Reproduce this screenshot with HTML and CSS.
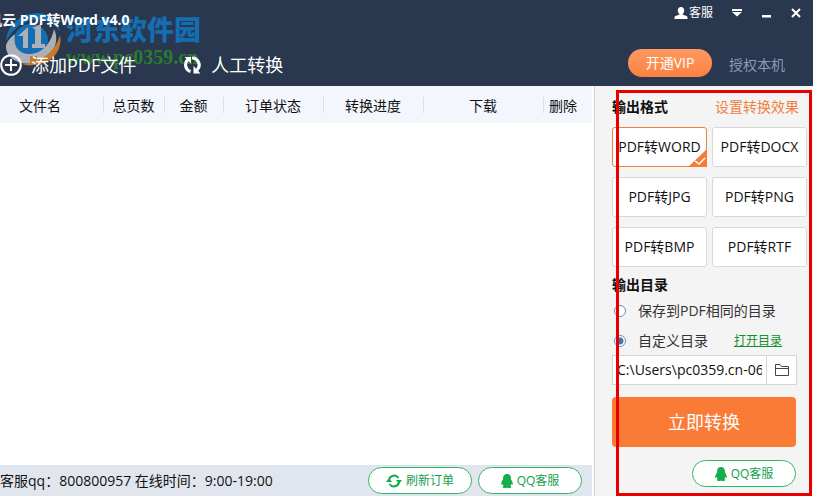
FILE: index.html
```html
<!DOCTYPE html>
<html lang="zh-CN">

<head>
    <meta charset="UTF-8">
    <meta name="viewport" content="width=device-width, initial-scale=1.0">
    <title>PDF转Word v4.0</title>
    <link rel="stylesheet" href="styles.css">
</head>

<body>
    <header class="header">
        <div class="watermark">
            <svg width="56" height="54" viewBox="0 0 56 54">
                <ellipse cx="26" cy="28" rx="17" ry="16" fill="#1277c4"/>
                <path d="M1 29C2 13 16 1 33 1c10 0 18 6 22 18C46 8 34 5 23 9 12 13 7 20 1 29z" fill="#1277c4"/>
                <path d="M10 22c-2 10 2 19 12 20 14 1 24-10 27-25 7 14-3 31-20 34C13 54 0 45 1 33c2-5 5-8 9-11z" fill="#c3c6cb"/>
                <path d="M55 23c3 15-8 29-26 30-5 1-9 0-12-1 20-2 33-12 38-29z" fill="#e08423"/>
                <path d="M13 24l10-9v21h-5V24h-5zM27 16l9-4v20h4v4H27v-4h3V17z" fill="#c3c6cb"/>
                <path d="M25 44h7v9h-7z" fill="#e08423"/>
            </svg>
            <div class="watermark-text">
                <span class="watermark-name">河东软件园</span>
                <span class="watermark-url">www.pc0359.cn</span>
            </div>
        </div>

        <div class="titlebar">
            <h1 class="title">机云 PDF转Word v4.0</h1>
            <div class="window-controls">
                <a href="#" class="service">
                    <svg width="14" height="12" viewBox="0 0 14 12" fill="#fff"><ellipse cx="7" cy="3.6" rx="3.2" ry="3.6"/><path d="M5.5 6h3v1.6l4 1.3q1 .4 1 1.6V12H.5v-1.5q0-1.200 1-1.600l4-1.300z"/></svg>
                    <span>客服</span>
                </a>
                <button type="button" class="win-btn" aria-label="菜单">
                    <svg width="12" height="8" viewBox="0 0 12 8" fill="#fff"><path d="M1 0h10v2H1zM1 3h10L6 7.500z"/></svg>
                </button>
                <button type="button" class="win-btn" aria-label="最小化">
                    <svg width="12" height="10" viewBox="0 0 12 10" fill="#fff"><path d="M1 7h9v2.500H1z"/></svg>
                </button>
                <button type="button" class="win-btn" aria-label="关闭">
                    <svg width="10" height="10" viewBox="0 0 10 10" stroke="#fff" stroke-width="2"><path d="M1 1l8 8M9 1L1 9"/></svg>
                </button>
            </div>
        </div>

        <div class="toolbar">
            <button type="button" class="tool">
                <svg width="22" height="22" viewBox="0 0 22 22" fill="none" stroke="#fff" stroke-width="2"><circle cx="11" cy="11" r="9.800"/><path d="M11 5v12M5 11h12"/></svg>
                <span>添加PDF文件</span>
            </button>
            <button type="button" class="tool">
                <svg width="19" height="18" viewBox="0 0 19 18" fill="none" stroke="#fff" stroke-width="3.200"><path d="M7.500 15.500A7 7 0 0 1 5 3.500M9 2A7 7 0 0 1 14 14"/><path d="M1.500 1H8v6.500zM17.500 17.500H10.500V10z" fill="#fff" stroke="none"/></svg>
                <span>人工转换</span>
            </button>
            <button type="button" class="vip">开通VIP</button>
            <a href="#" class="auth">授权本机</a>
        </div>
    </header>

    <div class="content">
        <main class="main">
            <!-- File list, empty until files are added -->
            <table class="file-table">
                <thead>
                    <tr>
                        <th class="col-name">文件名</th>
                        <th class="col-pages">总页数</th>
                        <th class="col-price">金额</th>
                        <th class="col-status">订单状态</th>
                        <th class="col-progress">转换进度</th>
                        <th class="col-download">下载</th>
                        <th class="col-delete">删除</th>
                    </tr>
                </thead>
                <tbody></tbody>
            </table>

            <footer class="footer">
                <span class="contact">客服qq：800800957 在线时间：9:00-19:00</span>
                <button type="button" class="pill">
                    <svg width="16" height="14" viewBox="0 0 16 14" fill="none" stroke="#12b04c" stroke-width="2"><path d="M3 6a5.200 5.200 0 0 1 9.500-2M13 8a5.200 5.200 0 0 1-9.500 2"/><path d="M0 8h6L3 4zM10 6h6l-3 4z" fill="#12b04c" stroke="none"/></svg>
                    <span>刷新订单</span>
                </button>
                <button type="button" class="pill">
                    <svg width="12" height="14" viewBox="0 0 12 14" fill="#12b04c"><path d="M6 0c2.500 0 4 1.800 4 4.500v1c1.200 1.500 2 3.500 1.700 5-.3.800-.8.400-1.400-.5-.2.800-.5 1.300-1 1.800 1.500.7 1.200 2.200-.8 2.200H7l-1-.5-1 .5H3.500c-2 0-2.300-1.500-.8-2.200-.5-.5-.8-1-1-1.800-.6.900-1.100 1.300-1.400.5C0 9 .8 7 2 5.500v-1C2 1.800 3.500 0 6 0z"/></svg>
                    <span>QQ客服</span>
                </button>
            </footer>
        </main>

        <aside class="sidebar">
            <div class="section-head">
                <h2>输出格式</h2>
                <a href="#" class="effect-link">设置转换效果</a>
            </div>

            <div class="formats">
                <button type="button" class="format active">PDF转WORD
                    <svg class="check" width="19" height="18" viewBox="0 0 19 18"><path d="M19 0v18H0z" fill="#f87c38"/><path d="M7 12l4 3 6-6" fill="none" stroke="#fff" stroke-width="1.500"/></svg>
                </button>
                <button type="button" class="format">PDF转DOCX</button>
                <button type="button" class="format">PDF转JPG</button>
                <button type="button" class="format">PDF转PNG</button>
                <button type="button" class="format">PDF转BMP</button>
                <button type="button" class="format">PDF转RTF</button>
            </div>

            <h2>输出目录</h2>
            <div class="radio-row">
                <input type="radio" id="dirSame" name="dir">
                <label for="dirSame">保存到PDF相同的目录</label>
            </div>
            <div class="radio-row">
                <input type="radio" id="dirCustom" name="dir" checked>
                <label for="dirCustom">自定义目录</label>
                <a href="#" class="open-link">打开目录</a>
            </div>

            <div class="path-row">
                <input type="text" class="path" aria-label="输出目录" value="C:\Users\pc0359.cn-06">
                <button type="button" class="browse" aria-label="浏览">
                    <svg width="14" height="12" viewBox="0 0 14 12" fill="none" stroke="#444"><path d="M.5 11.500V.5h4.500l1.500 2h7v9zM.5 4.500h13"/></svg>
                </button>
            </div>

            <button type="button" class="convert">立即转换</button>
            <button type="button" class="pill side-pill">
                <svg width="12" height="14" viewBox="0 0 12 14" fill="#12b04c"><path d="M6 0c2.500 0 4 1.800 4 4.500v1c1.200 1.500 2 3.500 1.700 5-.3.800-.8.400-1.400-.5-.2.800-.5 1.300-1 1.800 1.500.7 1.200 2.200-.8 2.200H7l-1-.5-1 .5H3.500c-2 0-2.300-1.500-.8-2.200-.5-.5-.8-1-1-1.800-.6.900-1.100 1.300-1.400.5C0 9 .8 7 2 5.500v-1C2 1.800 3.500 0 6 0z"/></svg>
                <span>QQ客服</span>
            </button>

            <!-- Red highlight over the output settings -->
            <div class="highlight"></div>
        </aside>
    </div>
</body>

</html>
```
FILE: styles.css
```css
* {
    box-sizing: border-box;
}

body {
    margin: 0;
    height: 100vh;
    display: flex;
    flex-direction: column;
    overflow: hidden;
    font-family: "Open Sans", "Noto Sans CJK SC", sans-serif;
    font-size: 14px;
    line-height: 20px;
    color: #111;
}

button,
input {
    font-family: inherit;
    font-size: inherit;
    line-height: inherit;
    margin: 0;
    padding: 0;
}

button {
    border: none;
    background: none;
    cursor: pointer;
    white-space: nowrap;
}

a {
    text-decoration: none;
}

svg {
    flex: none;
}

/* Header */
.header {
    position: relative;
    background-color: #29384e;
    color: #fff;
}

.titlebar,
.toolbar {
    position: relative;
}

.titlebar {
    display: flex;
    justify-content: space-between;
    height: 40px;
}

.title {
    margin: 10px 0 0 -12px;
    font-size: 14px;
    font-weight: bold;
    line-height: 20px;
    white-space: nowrap;
}

.window-controls {
    display: flex;
    align-items: center;
    gap: 18px;
    height: 26px;
    padding-right: 12px;
}

.service {
    display: flex;
    align-items: center;
    gap: 1px;
    color: #fff;
    font-size: 12px;
}

.win-btn {
    display: flex;
}

.toolbar {
    display: flex;
    align-items: center;
    height: 46px;
    padding-right: 28px;
}

.tool {
    display: flex;
    align-items: center;
    gap: 9px;
    margin-right: 47px;
    padding-top: 4px;
    color: #fff;
    font-size: 18px;
    line-height: 24px;
}

.vip {
    width: 84px;
    height: 28px;
    margin-left: auto;
    border-radius: 14px;
    background: linear-gradient(#ff9a62, #fb8140);
    color: #fff;
}

.auth {
    margin-left: 17px;
    padding-top: 4px;
    color: #8b9ab8;
}

.watermark {
    position: absolute;
    top: 12px;
    left: 5px;
    display: flex;
    gap: 5px;
    opacity: 0.85;
    pointer-events: none;
}

.watermark-text {
    display: flex;
    flex-direction: column;
    font-weight: 900;
    white-space: nowrap;
}

.watermark-name {
    font-size: 27px;
    line-height: 36px;
    color: #1277c4;
}

.watermark-url {
    font-family: "Liberation Serif", serif;
    font-size: 20px;
    line-height: 18px;
    color: #2b8a2b;
}

/* Content */
.content {
    flex: 1;
    display: flex;
    min-height: 0;
}

.main {
    flex: 1;
    min-width: 0;
    display: flex;
    flex-direction: column;
    justify-content: space-between;
    padding-right: 2px;
    background-color: #fff;
}

.file-table {
    width: 100%;
    table-layout: fixed;
    border-collapse: collapse;
    background-color: #f3f6fd;
}

.file-table th {
    height: 37px;
    padding: 2px 2px 0 0;
    font-weight: normal;
    background: linear-gradient(#dcdfe6, #dcdfe6) right center / 1px 16px no-repeat;
}

.file-table .col-name {
    width: 104px;
    padding-right: 24px;
}

.col-pages {
    width: 61px;
}

.col-price {
    width: 59px;
}

.col-status,
.col-progress {
    width: 100px;
}

.file-table .col-delete {
    width: 48px;
    padding-right: 10px;
    background: none;
}

.footer {
    display: flex;
    align-items: center;
    gap: 6px;
    height: 31px;
    padding-right: 10px;
    background-color: #e1e6ee;
}

.contact {
    flex: 1;
    white-space: nowrap;
}

.pill {
    display: flex;
    align-items: center;
    justify-content: center;
    gap: 4px;
    width: 104px;
    height: 27px;
    border: 1px solid #2fb865;
    border-radius: 14px;
    background-color: #fff;
    color: #12a04a;
    font-size: 12px;
}

/* Sidebar */
.sidebar {
    position: relative;
    width: 219px;
    padding: 11px 6px 0 17px;
    border-left: 1px solid #d0d0d0;
    background-color: #f4f4f4;
}

.sidebar h2 {
    margin: 0;
    font-size: 14px;
    font-weight: bold;
    line-height: 20px;
}

.section-head {
    display: flex;
    justify-content: space-between;
    padding-right: 8px;
}

.effect-link {
    color: #f08040;
}

.formats {
    display: grid;
    grid-template-columns: 1fr 1fr;
    gap: 10px 5px;
    margin: 10px 0 8px;
}

.format {
    position: relative;
    height: 40px;
    border: 1px solid #d8d8d8;
    border-radius: 3px;
    background-color: #fff;
    color: #111;
}

.format.active {
    border-color: #f08040;
}

.check {
    position: absolute;
    right: -1px;
    bottom: -1px;
}

.radio-row {
    display: flex;
    align-items: center;
    height: 20px;
    margin-top: 6px;
    padding-left: 2px;
    color: #333;
}

.radio-row + .radio-row {
    margin-top: 10px;
}

.radio-row input {
    appearance: none;
    width: 12px;
    height: 12px;
    margin-right: 12px;
    border: 1px solid #6a8fb5;
    border-radius: 50%;
    background-color: #fff;
}

.radio-row input:checked {
    background: radial-gradient(circle, #3b77b0 3px, #fff 4px);
}

.open-link {
    margin-left: 26px;
    color: #12912a;
    font-size: 12px;
    text-decoration: underline;
}

.path-row {
    display: flex;
    height: 30px;
    margin: 4px 10px 12px 0;
    border: 1px solid #d5d5d5;
    background-color: #fff;
}

.path {
    flex: 1;
    min-width: 0;
    padding: 0 4px;
    border: none;
    background: none;
    color: #111;
}

.browse {
    display: flex;
    align-items: center;
    justify-content: center;
    width: 30px;
    border-left: 1px solid #d5d5d5;
}

.convert {
    display: block;
    width: 184px;
    height: 50px;
    border-radius: 4px;
    background-color: #f97b36;
    color: #fff;
    font-size: 18px;
}

.side-pill {
    margin: 13px 11px 0 auto;
}

.highlight {
    position: absolute;
    top: 4px;
    right: 1px;
    bottom: 0;
    left: 21px;
    border: 3px solid #e60000;
    pointer-events: none;
}
```
